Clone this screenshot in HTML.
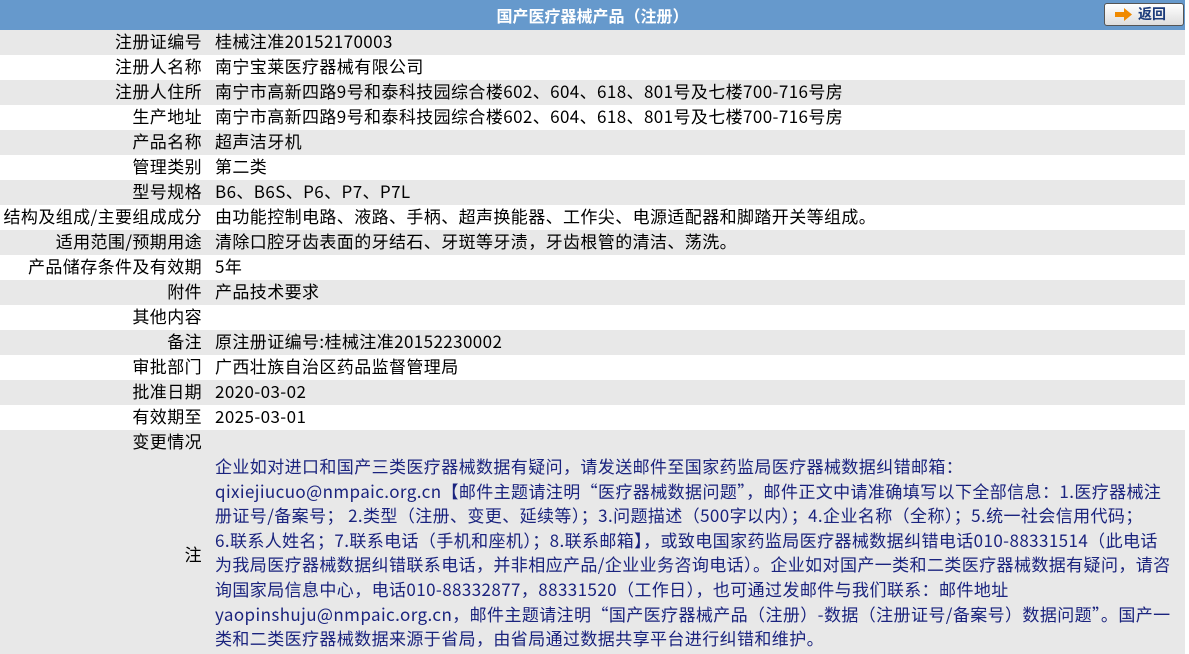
<html><head><style>
body{margin:0;width:1189px;height:654px;overflow:hidden;background:#fff;font-family:"Noto Sans CJK SC","Liberation Sans",sans-serif;font-size:17px;color:#000;letter-spacing:0.4px}
.hd{height:30px;background:#6699cc;position:relative;color:#fff;font-weight:bold;text-align:center;line-height:30px;font-size:16px;width:1185px;letter-spacing:0}
.btn{position:absolute;left:1104px;top:3px;width:78px;height:21px;border:1px solid #555;border-radius:3px;background:linear-gradient(#fff,#ddd);line-height:20px;font-size:14px;color:#1a3a7a;text-align:left}
.row{height:25px;line-height:25px;width:1185px;white-space:nowrap;position:relative}
.g{background:#e8e8e8}
.l{position:absolute;right:983px;top:-2px}
.v{position:absolute;left:215px;top:-2px}
.note{position:absolute;left:215px;top:454px;line-height:24.6px;color:#1a237e;white-space:nowrap}
</style></head><body>
<div class="hd">国产医疗器械产品（注册）<div class="btn"><svg style="position:absolute;left:10px;top:4px" width="18" height="13"><path d="M0 4h9V0l8 6.5-8 6.5V9H0z" fill="#f08a00"/></svg><span style="position:absolute;left:33px;top:0">返回</span></div></div>
<div class="row g"><span class="l">注册证编号</span><span class="v">桂械注准20152170003</span></div>
<div class="row"><span class="l">注册人名称</span><span class="v">南宁宝莱医疗器械有限公司</span></div>
<div class="row g"><span class="l">注册人住所</span><span class="v">南宁市高新四路9号和泰科技园综合楼602、604、618、801号及七楼700-716号房</span></div>
<div class="row"><span class="l">生产地址</span><span class="v">南宁市高新四路9号和泰科技园综合楼602、604、618、801号及七楼700-716号房</span></div>
<div class="row g"><span class="l">产品名称</span><span class="v">超声洁牙机</span></div>
<div class="row"><span class="l">管理类别</span><span class="v">第二类</span></div>
<div class="row g"><span class="l">型号规格</span><span class="v">B6、B6S、P6、P7、P7L</span></div>
<div class="row"><span class="l">结构及组成/主要组成成分</span><span class="v">由功能控制电路、液路、手柄、超声换能器、工作尖、电源适配器和脚踏开关等组成。</span></div>
<div class="row g"><span class="l">适用范围/预期用途</span><span class="v">清除口腔牙齿表面的牙结石、牙斑等牙渍，牙齿根管的清洁、荡洗。</span></div>
<div class="row"><span class="l">产品储存条件及有效期</span><span class="v">5年</span></div>
<div class="row g"><span class="l">附件</span><span class="v">产品技术要求</span></div>
<div class="row"><span class="l">其他内容</span><span class="v"></span></div>
<div class="row g"><span class="l">备注</span><span class="v">原注册证编号:桂械注准20152230002</span></div>
<div class="row"><span class="l">审批部门</span><span class="v">广西壮族自治区药品监督管理局</span></div>
<div class="row g"><span class="l">批准日期</span><span class="v">2020-03-02</span></div>
<div class="row"><span class="l">有效期至</span><span class="v">2025-03-01</span></div>
<div class="g" style="position:absolute;top:430px;left:0;width:1185px;height:224px"><span style="position:absolute;right:983px;top:-2px;line-height:25px">变更情况</span><span style="position:absolute;right:983px;top:111px;line-height:25px">注</span></div>
<div class="note">企业如对进口和国产三类医疗器械数据有疑问，请发送邮件至国家药监局医疗器械数据纠错邮箱：<br>qixiejiucuo@nmpaic.org.cn【邮件主题请注明“医疗器械数据问题”，邮件正文中请准确填写以下全部信息：1.医疗器械注<br>册证号/备案号； 2.类型（注册、变更、延续等）；3.问题描述（500字以内）；4.企业名称（全称）；5.统一社会信用代码；<br>6.联系人姓名；7.联系电话（手机和座机）；8.联系邮箱】，或致电国家药监局医疗器械数据纠错电话010-88331514（此电话<br>为我局医疗器械数据纠错联系电话，并非相应产品/企业业务咨询电话）。企业如对国产一类和二类医疗器械数据有疑问，请咨<br>询国家局信息中心，电话010-88332877，88331520（工作日），也可通过发邮件与我们联系：邮件地址<br>yaopinshuju@nmpaic.org.cn，邮件主题请注明“国产医疗器械产品（注册）-数据（注册证号/备案号）数据问题”。国产一<br>类和二类医疗器械数据来源于省局，由省局通过数据共享平台进行纠错和维护。</div>
</body></html>
